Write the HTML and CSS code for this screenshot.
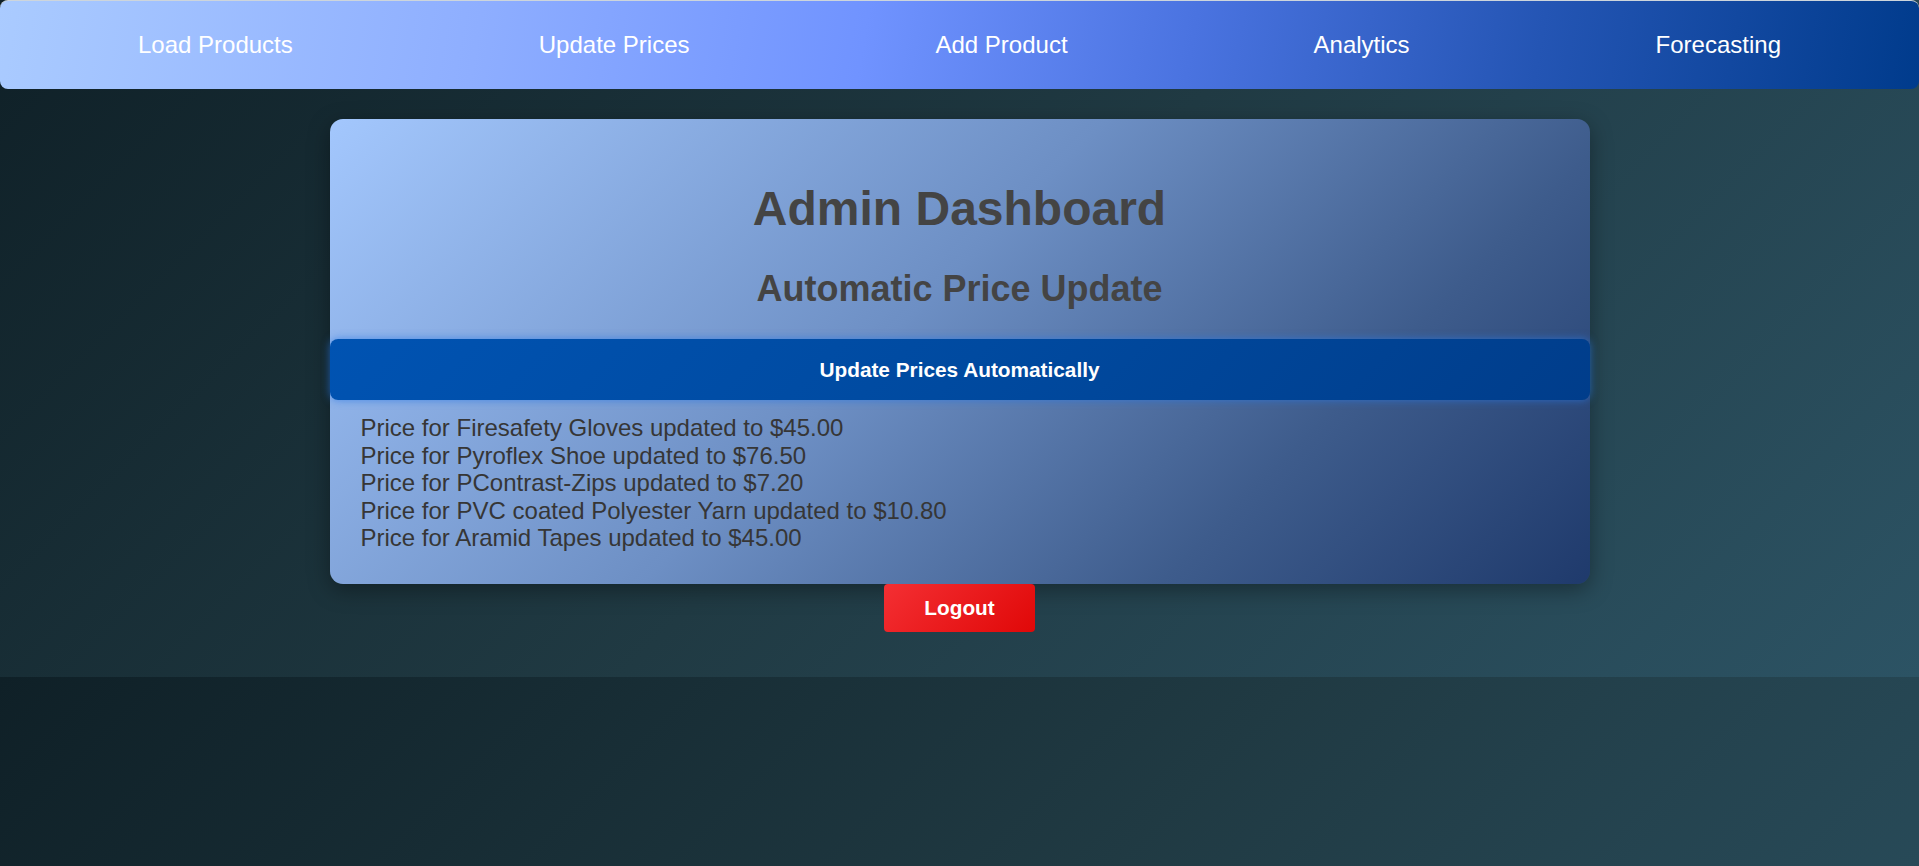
FILE: index.html
```html
<!DOCTYPE html>
<html lang="en">
<head>
<meta charset="utf-8">
<title>Admin Dashboard</title>
<link rel="stylesheet" href="styles.css">
</head>
<body>
<nav class="navbar">
  <a class="nav-link" href="#">Load Products</a>
  <a class="nav-link" href="#">Update Prices</a>
  <a class="nav-link" href="#">Add Product</a>
  <a class="nav-link" href="#">Analytics</a>
  <a class="nav-link" href="#">Forecasting</a>
</nav>
<main class="container">
  <section class="card">
    <h1 class="title">Admin Dashboard</h1>
    <h2 class="subtitle">Automatic Price Update</h2>
    <button class="btn-update" type="button">Update Prices Automatically</button>
    <div class="results">
      <div class="result-line">Price for Firesafety Gloves updated to $45.00</div>
      <div class="result-line">Price for Pyroflex Shoe updated to $76.50</div>
      <div class="result-line">Price for PContrast-Zips updated to $7.20</div>
      <div class="result-line">Price for PVC coated Polyester Yarn updated to $10.80</div>
      <div class="result-line">Price for Aramid Tapes updated to $45.00</div>
    </div>
  </section>
  <button class="btn-logout" type="button">Logout</button>
</main>
</body>
</html>
```
FILE: styles.css
```css
* {
  box-sizing: border-box;
}

body {
  margin: 0;
  font-family: "Liberation Sans", Arial, Helvetica, sans-serif;
  background: linear-gradient(135deg, #0f2027 0%, #203a43 50%, #2c5364 100%);
}

.navbar {
  height: 89px;
  display: flex;
  align-items: center;
  justify-content: space-around;
  padding: 0 15px;
  border-top: 1px solid #cdd5dc;
  border-radius: 8px;
  background: linear-gradient(100deg, #aacbff 0%, #8eaeff 25%, #7093ff 45%, #4a73e0 62%, #2455b4 80%, #003b8c 100%);
}

.nav-link {
  color: #ffffff;
  text-decoration: none;
  font-size: 24px;
  line-height: 28px;
}

.container {
  display: flex;
  flex-direction: column;
  align-items: center;
  padding-top: 30px;
  padding-bottom: 45px;
}

.card {
  width: 1260px;
  padding: 30px 0 32px;
  border-radius: 13px;
  background: linear-gradient(135deg, #a3c7fd 0%, #6d8fc4 45%, #3e5c8c 75%, #1f3a6c 100%);
  box-shadow: 0 6px 22px rgba(0, 0, 0, 0.35);
}

.title {
  margin: 32px 0;
  text-align: center;
  font-size: 48px;
  line-height: 55px;
  font-weight: bold;
  color: #444444;
}

.subtitle {
  margin: 32px 0 30px;
  text-align: center;
  font-size: 36px;
  line-height: 41px;
  font-weight: bold;
  color: #444444;
}

.btn-update {
  display: block;
  width: 100%;
  height: 61px;
  padding: 0;
  border: none;
  border-radius: 8px;
  background: linear-gradient(135deg, #0053b2 0%, #004aa0 50%, #003d8b 100%);
  box-shadow: 0 0 8px rgba(40, 120, 230, 0.7);
  color: #ffffff;
  font-family: "Liberation Sans", Arial, Helvetica, sans-serif;
  font-size: 20.8px;
  font-weight: bold;
  cursor: pointer;
}

.results {
  margin-top: 14px;
  padding: 0 31px;
}

.result-line {
  font-size: 24px;
  line-height: 27.6px;
  color: #363636;
}

.btn-logout {
  height: 48px;
  padding: 0 40px;
  border: none;
  border-radius: 4px;
  background: linear-gradient(135deg, #f42f33 0%, #e00808 100%);
  color: #ffffff;
  font-family: "Liberation Sans", Arial, Helvetica, sans-serif;
  font-size: 20.8px;
  font-weight: bold;
  cursor: pointer;
}
```
